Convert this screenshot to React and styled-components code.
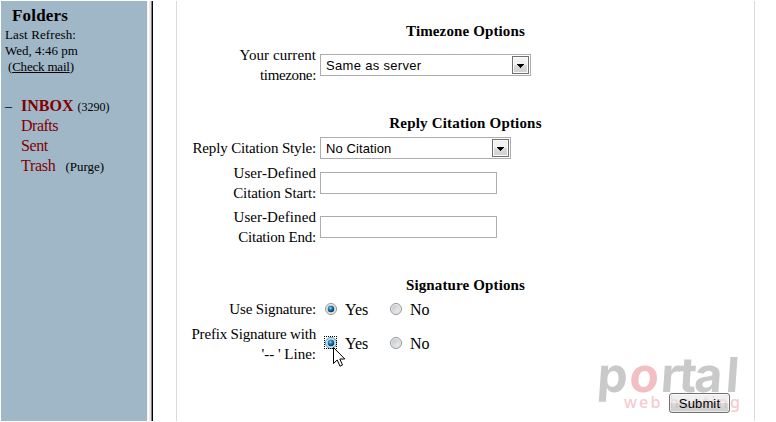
import React from "react";
import styled, { createGlobalStyle } from "styled-components";

const Global = createGlobalStyle`
  * { box-sizing: border-box; }
  body { margin: 0; background: #fff; overflow: hidden; }
`;

const Page = styled.div`
  position: relative;
  display: flex;
  width: 776px;
  height: 422px;
  overflow: hidden;
  background: #fff;
  color: #000;
  font-family: "Liberation Serif", "Times New Roman", serif;
  font-size: 15px;
  line-height: 20px;
  white-space: nowrap;
`;

const Sidebar = styled.aside`
  width: 146px;
  height: 420px;
  margin: 1px 0 0 1px;
  padding: 5px 0 0 4px;
  background: #a0b7c8;
`;

const Divider = styled.div`
  width: 6px;
  height: 420px;
  margin-top: 1px;
  background: linear-gradient(to right, #f4f4f5 0 1px, #fff 1px 2px, #efedef 2px 3px, #e4e2e4 3px 4px, #858385 4px 5px, #000 5px 6px);
`;

const FoldersTitle = styled.h1`
  margin: 0 0 1px 7px;
  font-size: 17px;
  line-height: 20px;
  letter-spacing: 0.2px;
`;

const Refresh = styled.div`
  font-size: 13px;
  line-height: 16px;
  padding-left: ${(p) => p.$indent || 0}px;
  letter-spacing: ${(p) => p.$spacing || 0}px;
`;

const FolderList = styled.nav`
  margin-top: 21px;
`;

const Folder = styled.div`
  display: flex;
  height: 20px;
  align-items: baseline;
`;

const Toggle = styled.span`
  width: 16px;
  font-size: 14px;
`;

const FolderName = styled.a`
  color: #800000;
  font-size: 16px;
  font-weight: ${(p) => (p.$current ? 700 : 400)};
  letter-spacing: ${(p) => p.$spacing || 0}px;
`;

const FolderNote = styled.span`
  font-size: ${(p) => p.$size || 13}px;
  margin-left: ${(p) => p.$gap}px;
`;

const Panel = styled.main`
  display: flex;
  flex-direction: column;
  width: 579px;
  height: 420px;
  margin: 1px 0 0 23px;
  padding-top: 20px;
  border: solid #dadada;
  border-width: 0 1px;
`;

const Section = styled.section`
  display: flex;
  flex-direction: column;
  height: ${(p) => p.$height}px;
`;

const Heading = styled.h2`
  margin: 0 0 4px;
  height: 20px;
  font-size: 15px;
  line-height: 20px;
  text-align: center;
  letter-spacing: ${(p) => p.$spacing || 0}px;
`;

const Row = styled.div`
  display: grid;
  grid-template-columns: 139px 1fr;
  column-gap: 4px;
  align-items: center;
  height: ${(p) => p.$height}px;
  margin-bottom: ${(p) => p.$after || 0}px;
`;

const Label = styled.label`
  display: flex;
  flex-direction: column;
  align-items: flex-end;
  font-size: 15px;
`;

const Line = styled.span`
  letter-spacing: ${(p) => p.$spacing || 0}px;
`;

const Select = styled.div`
  display: flex;
  justify-content: space-between;
  align-items: center;
  width: ${(p) => p.$width}px;
  height: 22px;
  padding: 0 1px 0 5px;
  border: 1px solid #abadb3;
  font: 13px/20px "Liberation Sans", Arial, sans-serif;
  letter-spacing: ${(p) => p.$spacing || 0}px;
`;

const SelectValue = styled.span`
  padding-top: 2px;
`;

const DropButton = styled.span`
  display: flex;
  align-items: center;
  justify-content: center;
  width: 17px;
  height: 18px;
  padding-top: 2px;
  border: 1px solid #707070;
  box-shadow: inset 0 0 0 1px #fbfbfb;
  background: linear-gradient(#f2f2f2 0 48%, #dddddd 49%, #cfcfcf);
`;

const TextField = styled.input`
  width: 177px;
  height: 22px;
  padding: 1px 4px;
  border: 1px solid #abadb3;
  border-radius: 0;
  background: #fff;
  outline: none;
`;

const Choices = styled.div`
  display: flex;
  padding-left: 4px;
  padding-bottom: ${(p) => p.$lift || 0}px;
`;

const Choice = styled.span`
  display: flex;
  align-items: center;
  width: 65px;
  height: 20px;
  font-size: 16px;
  gap: 7px;
`;

const ChoiceText = styled.span`
  padding-top: 2px;
`;

const RadioBox = styled.span`
  display: flex;
  margin-top: -1px;
  width: 14px;
  height: 14px;
`;

const SubmitRow = styled.div`
  display: flex;
  justify-content: flex-end;
  padding: 0 24px 0 0;
  margin-top: auto;
  margin-bottom: 8px;
`;

const Submit = styled.button`
  position: relative;
  z-index: 1;
  width: 61px;
  height: 20px;
  padding: 0;
  border: 1px solid #707070;
  border-radius: 3px;
  box-shadow: inset 0 0 0 1px rgba(255, 255, 255, 0.6);
  background: linear-gradient(rgba(229, 229, 229, 0.6) 0 48%, rgba(195, 195, 195, 0.6) 50%, rgba(172, 172, 172, 0.6));
  color: #000;
  font: 13px/20px "Liberation Sans", Arial, sans-serif;
  letter-spacing: 0.15px;
`;

const Watermark = styled.svg`
  position: absolute;
  left: 580px;
  top: 330px;
  pointer-events: none;
`;

const Cursor = styled.svg`
  position: absolute;
  left: 333px;
  top: 347px;
`;

function Arrow() {
  return (
    <svg width="7" height="4" shapeRendering="crispEdges">
      <path d="M0 0H7V1H6V2H5V3H4V4H3V3H2V2H1V1H0Z" fill="#000" />
    </svg>
  );
}

function Radio({ checked, focused }) {
  return (
    <RadioBox>
      <svg width="14" height="14" viewBox="0 0 14 14">
        <defs>
          <radialGradient id="dot" cx="40%" cy="35%" r="65%">
            <stop offset="0" stopColor="#8fe3fa" />
            <stop offset="0.4" stopColor="#2386b8" />
            <stop offset="1" stopColor="#0b2f50" />
          </radialGradient>
          <linearGradient id="well" x1="0" y1="0" x2="1" y2="1">
            <stop offset="0" stopColor="#bfc3c8" />
            <stop offset="1" stopColor="#f5f5f5" />
          </linearGradient>
        </defs>
        <circle cx="7" cy="7" r="5.5" fill={focused ? "#d5effb" : "#f4f4f4"} stroke={focused ? "#5594b5" : "#909394"} />
        <circle cx="7" cy="7" r="4" fill="url(#well)" stroke={focused ? "#a9d9ee" : "#d2d4d6"} strokeWidth="0.7" />
        {checked && <circle cx="7" cy="7" r="3.2" fill="url(#dot)" />}
        {focused && (
          <path
            d="M0 .5H13M0 12.5H13M.5 0V13M12.5 0V13"
            fill="none"
            stroke="#000"
            strokeDasharray="1 1"
            shapeRendering="crispEdges"
          />
        )}
      </svg>
    </RadioBox>
  );
}

function YesNo({ focused, lift }) {
  return (
    <Choices $lift={lift}>
      <Choice><Radio checked focused={focused} /><ChoiceText>Yes</ChoiceText></Choice>
      <Choice><Radio /><ChoiceText>No</ChoiceText></Choice>
    </Choices>
  );
}

export default function App() {
  return (
    <Page>
      <Global />
      <Sidebar>
        <FoldersTitle>Folders</FoldersTitle>
        <Refresh $spacing={0.1}>Last Refresh:</Refresh>
        <Refresh>Wed, 4:46 pm</Refresh>
        <Refresh $indent={3} $spacing={-0.2}>(<u>Check mail</u>)</Refresh>
        <FolderList>
          <Folder><Toggle>–</Toggle><FolderName $current>INBOX</FolderName><FolderNote $gap={4} $size={12}>(3290)</FolderNote></Folder>
          <Folder><Toggle /><FolderName $spacing={-0.5}>Drafts</FolderName></Folder>
          <Folder><Toggle /><FolderName $spacing={-0.4}>Sent</FolderName></Folder>
          <Folder><Toggle /><FolderName $spacing={-0.3}>Trash</FolderName><FolderNote $gap={10}>(Purge)</FolderNote></Folder>
        </FolderList>
      </Sidebar>
      <Divider />
      <Panel>
        <Section $height={92}>
          <Heading $spacing={0.13}>Timezone Options</Heading>
          <Row $height={40}>
            <Label><Line $spacing={0.08}>Your current</Line><Line $spacing={-0.35}>timezone:</Line></Label>
            <Select $width={211} $spacing={0.32}><SelectValue>Same as server</SelectValue><DropButton><Arrow /></DropButton></Select>
          </Row>
        </Section>
        <Section $height={162}>
          <Heading $spacing={0.18}>Reply Citation Options</Heading>
          <Row $height={22} $after={4}>
            <Label><Line $spacing={-0.15}>Reply Citation Style:</Line></Label>
            <Select $width={191} $spacing={0.1}><SelectValue>No Citation</SelectValue><DropButton><Arrow /></DropButton></Select>
          </Row>
          <Row $height={40} $after={4}>
            <Label><Line $spacing={0.1}>User-Defined</Line><Line $spacing={-0.12}>Citation Start:</Line></Label>
            <TextField />
          </Row>
          <Row $height={40}>
            <Label><Line $spacing={0.1}>User-Defined</Line><Line $spacing={-0.2}>Citation End:</Line></Label>
            <TextField />
          </Row>
        </Section>
        <Section $height={92}>
          <Heading $spacing={0.13}>Signature Options</Heading>
          <Row $height={20} $after={5}>
            <Label><Line $spacing={-0.15}>Use Signature:</Line></Label>
            <YesNo />
          </Row>
          <Row $height={40}>
            <Label><Line $spacing={-0.18}>Prefix Signature with</Line><Line>'-- ' Line:</Line></Label>
            <YesNo focused lift={2} />
          </Row>
        </Section>
        <SubmitRow><Submit>Submit</Submit></SubmitRow>
      </Panel>
      <Watermark width="196" height="92">
        <g fontFamily="Inter, sans-serif" fontSize="48" fontWeight="700" transform="translate(0 61.5) skewX(-4)">
          <text x="16.5 48.5 80 98 113.5 145" fill="#c9c9ca">
            p<tspan fill="#f2bfc2">o</tspan>rtal
          </text>
        </g>
        <text x="44" y="78" fontFamily="Noto Sans, sans-serif" fontSize="16" fontWeight="500" fill="#f5cbce" textLength="116">
          web hosting
        </text>
      </Watermark>
      <Cursor width="13" height="20" viewBox="0 0 13 20">
        <path d="M.5 .5V16.5L4.2 13L7 19.2L9.5 18L6.8 12H11.8Z" fill="#fff" stroke="#000" />
      </Cursor>
    </Page>
  );
}
